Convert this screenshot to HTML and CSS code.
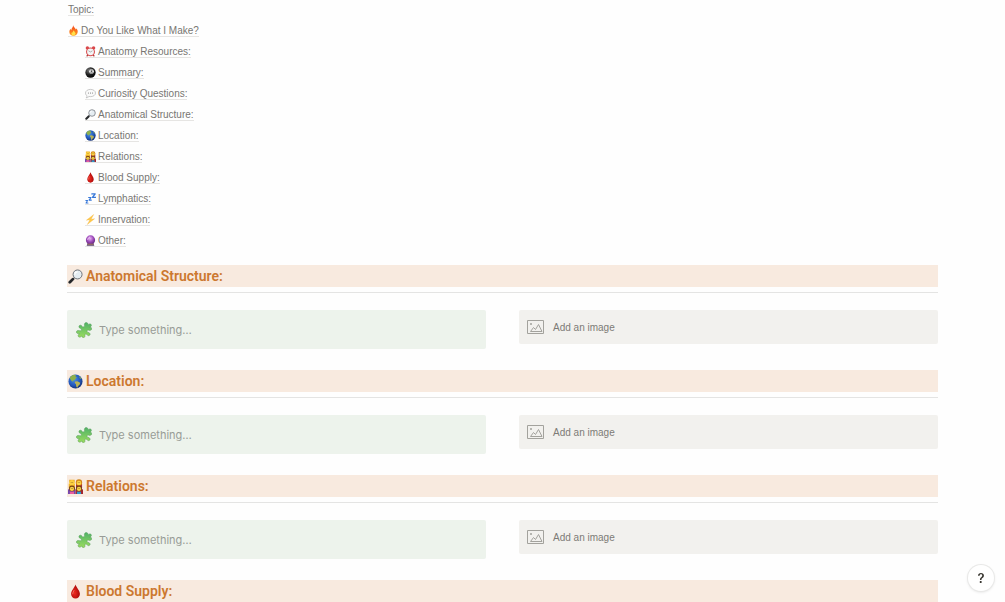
FILE: index.html
```
<!DOCTYPE html>
<html lang="en">
<head>
  <meta charset="UTF-8" />
  <meta name="viewport" content="width=device-width, initial-scale=1" />
  <title>Anatomy Notes</title>
  <link rel="stylesheet" href="styles.css">
</head>
<body>
  <!-- Icon sprite -->
  <svg class="sprite" aria-hidden="true">
    <defs>
      <linearGradient id="g-fire" x1="0" y1="0" x2="0" y2="1">
        <stop offset="0" stop-color="#f4481e" /><stop offset="1" stop-color="#ff9a1c" />
      </linearGradient>
      <linearGradient id="g-puzzle" x1="0" y1="0" x2="0" y2="1">
        <stop offset="0" stop-color="#4fb368" /><stop offset="1" stop-color="#9bdc5e" />
      </linearGradient>
      <radialGradient id="g-earth" cx="0.4" cy="0.35" r="0.7">
        <stop offset="0" stop-color="#4b8fe6" /><stop offset="0.6" stop-color="#2358bd" /><stop offset="1" stop-color="#122c70" />
      </radialGradient>
      <radialGradient id="g-ball" cx="0.35" cy="0.3" r="0.8">
        <stop offset="0" stop-color="#777" /><stop offset="0.5" stop-color="#222" /><stop offset="1" stop-color="#000" />
      </radialGradient>
      <radialGradient id="g-crystal" cx="0.45" cy="0.35" r="0.65">
        <stop offset="0" stop-color="#e9b6f3" /><stop offset="0.5" stop-color="#a452c0" /><stop offset="1" stop-color="#62257f" />
      </radialGradient>
      <radialGradient id="g-drop" cx="0.4" cy="0.6" r="0.6">
        <stop offset="0" stop-color="#ee2a20" /><stop offset="1" stop-color="#a80808" />
      </radialGradient>
    </defs>
    <symbol id="fire" viewBox="0 0 16 16">
      <path fill="url(#g-fire)" d="M7.400.5c.7 2.500 3.400 4 4 6.200.6-.5.800-1.300.700-2.100 1.500 1.700 2.200 3.700 2 5.600-.3 3.300-2.700 5.300-6.100 5.300S2.200 13.500 2 10.500c-.2-2.200.8-3.700 1.600-5 .2 1 .5 1.600 1.100 2C5 4.900 7.500 3.600 7.400.5z" />
      <path fill="#ffe04a" d="M8.200 7.500c.2 1.700 2.800 2.900 2.800 5 0 1.700-1.300 2.700-3 2.700s-3-1-3-2.600c0-1.200.5-1.900 1.100-2.600.1.600.3 1 .7 1.200 0-1.400.7-2.700 1.400-3.700z" />
    </symbol>
    <symbol id="clock" viewBox="0 0 16 16">
      <path stroke="#a42b2b" stroke-width="1.600" d="M4 13l-1.500 2M12 13l1.500 2" />
      <circle cx="3.500" cy="3" r="2.500" fill="#d9474a" /><circle cx="12.500" cy="3" r="2.500" fill="#d9474a" />
      <circle cx="8" cy="8.500" r="6.500" fill="#d8494a" /><circle cx="8" cy="8.500" r="5" fill="#f3f5f6" />
      <path fill="none" stroke="#777" stroke-width=".8" d="M5 7l3 1.700L10.800 7" />
    </symbol>
    <symbol id="eight" viewBox="0 0 16 16">
      <circle cx="8" cy="8" r="7.500" fill="url(#g-ball)" />
      <circle cx="9.500" cy="6.500" r="3.400" fill="#fff" />
      <circle cx="9.500" cy="5.500" r="1" fill="none" stroke="#222" stroke-width=".8" />
      <circle cx="9.500" cy="7.600" r="1.200" fill="none" stroke="#222" stroke-width=".8" />
    </symbol>
    <symbol id="bubble" viewBox="0 0 16 16">
      <path fill="#fafafa" stroke="#aaa" stroke-width=".9" d="M8 2c4 0 7.300 2.200 7.300 5.300S12 12.600 8 12.600c-.8 0-1.500-.1-2.200-.3-1 1.300-2.400 2-4.200 2 .9-.7 1.400-1.600 1.500-2.800C1.600 10.500.7 9 .7 7.300.7 4.200 4 2 8 2z" />
      <g fill="#777"><circle cx="5" cy="7.300" r=".8" /><circle cx="8" cy="7.300" r=".8" /><circle cx="11" cy="7.300" r=".8" /></g>
    </symbol>
    <symbol id="magnifier" viewBox="0 0 16 16">
      <path stroke="#8b9095" stroke-width="1.500" d="M7 9L5 11" />
      <path stroke="#26282b" stroke-width="3" stroke-linecap="round" d="M5.200 10.800L1.900 14.100" />
      <circle cx="10.200" cy="5.800" r="4.800" fill="#e5edf2" stroke="#666b71" stroke-width="1" />
      <path fill="none" stroke="#fff" stroke-width="1.200" d="M7.200 6a3 3 0 0 1 3-3" />
    </symbol>
    <symbol id="earth" viewBox="0 0 16 16">
      <circle cx="8" cy="8" r="7.500" fill="url(#g-earth)" />
      <path fill="#8fb04b" d="M1.700 4.200C3 2.300 4.700 1.100 6.700.8l2 .8-.8 1.500 1.700.6-1.600 1.400-1 1.500-1.700.3.500 1.400-2-.9-1-1.600z" />
      <path fill="#b7b356" d="M7.600 8l2.300-.4 3.100 1.700-.5 2-1.700 1.400-1 2.300-1.100-1.900-.2-2.200-1.400-1.500z" />
      <path fill="#8fb04b" d="M11.600 2l2 1.600.9 1.700-1.700-.5z" />
    </symbol>
    <symbol id="family" viewBox="0 0 16 16">
      <path fill="#f1ae22" d="M.8 5h6.500v5H.8z" /><path fill="#a92d34" d="M8.500 5H15v5H8.500z" />
      <path fill="#e8a820" d="M1.300.8h5.800v3H1.300z" />
      <circle cx="4.200" cy="4" r="2.900" fill="#fcd040" /><circle cx="11.700" cy="3.700" r="3.400" fill="#d28618" />
      <circle cx="11.700" cy="4.300" r="2.400" fill="#fcd448" />
      <path fill="#7549ae" d="M0 11h8v5H0z" /><path fill="#a4262e" d="M8 11h8v5H8z" />
      <circle cx="4.200" cy="10" r="3.200" fill="#754016" /><circle cx="11.700" cy="10" r="3.200" fill="#754016" />
      <circle cx="4.200" cy="10.600" r="2.300" fill="#fcd448" /><circle cx="11.700" cy="10.600" r="2.300" fill="#fcd448" />
      <path fill="#eb5c9c" d="M2 13.500h4.400V16H2z" /><path fill="#2f9bcd" d="M9.500 13.500h4.400V16H9.500z" />
      <g fill="#543311"><circle cx="3.300" cy="3.700" r=".4" /><circle cx="5.100" cy="3.700" r=".4" /><circle cx="10.800" cy="3.900" r=".4" /><circle cx="12.600" cy="3.900" r=".4" /><circle cx="3.300" cy="10.300" r=".4" /><circle cx="5.100" cy="10.300" r=".4" /><circle cx="10.800" cy="10.300" r=".4" /><circle cx="12.600" cy="10.300" r=".4" /></g>
    </symbol>
    <symbol id="drop" viewBox="0 0 16 16">
      <path fill="url(#g-drop)" d="M8 .5c1 3.300 4.700 6.600 4.700 10.200 0 2.900-2.100 4.800-4.700 4.800s-4.700-1.900-4.700-4.800C3.300 7.100 7 3.800 8 .5z" />
      <path fill="none" stroke="#f77b70" stroke-width=".9" stroke-linecap="round" d="M5 10.500c.1-1.400.7-2.500 1.400-3.600" />
    </symbol>
    <symbol id="zzz" viewBox="0 0 16 16">
      <g fill="none" stroke="#3878d8" stroke-linejoin="round" stroke-linecap="round">
        <path stroke-width="2" d="M10 1.300h4.800l-4 5h4.400" />
        <path stroke-width="1.700" d="M5.300 6.500h3.400L6 10.300h3.200" />
        <path stroke-width="1.500" d="M1.200 11h2.600l-2.300 3.500h2.800" />
      </g>
    </symbol>
    <symbol id="bolt" viewBox="0 0 16 16">
      <path fill="#ffc94a" stroke="#efaa2e" stroke-width=".4" d="M12.700.7L2 9l5.200-.5L3.300 15.300 14 6.900l-5.200.6z" />
    </symbol>
    <symbol id="crystal" viewBox="0 0 16 16">
      <path fill="#59406c" d="M3.800 12h8.400l1.400 3.500H2.400z" />
      <circle cx="8" cy="7.200" r="6.700" fill="url(#g-crystal)" />
      <path fill="none" stroke="#f6def9" stroke-width="1.100" stroke-linecap="round" d="M4 6.500c.3-1.600 1.300-2.700 2.800-3.300" />
      <path fill="#c5a25b" d="M3.500 12.800h9v1h-9z" />
    </symbol>
    <symbol id="puzzle" viewBox="0 0 16 16">
      <path fill="url(#g-puzzle)" stroke="#5a9a5c" stroke-width=".5" stroke-linejoin="round" d="M8.600 3.900C8 2.600 8.500.9 9.900.6c1.500-.3 2.200.9 2 2.200 1-.9 2.400-1.300 3.200-.4.900 1-.1 2.300-1.400 2.900 1.300-.1 2.200.5 2 1.700-.3 1.400-1.700 1.600-3 1.200-1.100-.3-1.800.2-1.600 1.200.2.800 1.100 1 1.900 1.300 1.200.5 1.500 1.700.7 2.500-.9.900-2.200.4-2.900-.6-.5-.8-1.500-.7-1.800.1-.3.900.3 1.900-.6 2.600-1.100.8-2.500.1-2.600-1.300-.9 1.100-2.400 1.600-3.300.7-1-.9-.2-2.300 1-3C2 11.800.4 11.500.4 10c0-1.300 1.500-1.900 2.800-1.400 1 .4 2 .2 2.200-.7.200-.8-.7-1.200-1.400-1.600-1.100-.6-1.500-1.900-.6-2.700.9-.9 2.200-.3 2.800.8.500.9 2 .5 2.400-.5z" />
    </symbol>
    <symbol id="image" viewBox="0 0 17 14">
      <path fill="none" stroke="currentColor" d="M.5.500h16v13H.5zM3.500 11.500l3-4 2 2 3-5 3.500 7zM3.500 3.500h1v1h-1z" />
    </symbol>
  </svg>

  <main class="page">
    <nav class="toc">
      <a href="#topic">Topic:</a>
      <a href="#support"><svg class="icon"><use href="#fire" /></svg>Do You Like What I Make?</a>
      <ul>
        <li><a href="#resources"><svg class="icon"><use href="#clock" /></svg>Anatomy Resources:</a></li>
        <li><a href="#summary"><svg class="icon"><use href="#eight" /></svg>Summary:</a></li>
        <li><a href="#questions"><svg class="icon"><use href="#bubble" /></svg>Curiosity Questions:</a></li>
        <li><a href="#structure"><svg class="icon"><use href="#magnifier" /></svg>Anatomical Structure:</a></li>
        <li><a href="#location"><svg class="icon"><use href="#earth" /></svg>Location:</a></li>
        <li><a href="#relations"><svg class="icon"><use href="#family" /></svg>Relations:</a></li>
        <li><a href="#blood"><svg class="icon"><use href="#drop" /></svg>Blood Supply:</a></li>
        <li><a href="#lymphatics"><svg class="icon"><use href="#zzz" /></svg>Lymphatics:</a></li>
        <li><a href="#innervation"><svg class="icon"><use href="#bolt" /></svg>Innervation:</a></li>
        <li><a href="#other"><svg class="icon"><use href="#crystal" /></svg>Other:</a></li>
      </ul>
    </nav>

    <section id="structure">
      <h2><svg class="icon"><use href="#magnifier" /></svg>Anatomical Structure:</h2>
      <hr>
      <div class="columns">
        <label class="callout">
          <svg class="icon"><use href="#puzzle" /></svg>
          <input type="text" placeholder="Type something…" aria-label="Anatomical structure notes">
        </label>
        <button type="button" class="add-image"><svg><use href="#image" /></svg>Add an image</button>
      </div>
    </section>

    <section id="location">
      <h2><svg class="icon"><use href="#earth" /></svg>Location:</h2>
      <hr>
      <div class="columns">
        <label class="callout">
          <svg class="icon"><use href="#puzzle" /></svg>
          <input type="text" placeholder="Type something…" aria-label="Location notes">
        </label>
        <button type="button" class="add-image"><svg><use href="#image" /></svg>Add an image</button>
      </div>
    </section>

    <section id="relations">
      <h2><svg class="icon"><use href="#family" /></svg>Relations:</h2>
      <hr>
      <div class="columns">
        <label class="callout">
          <svg class="icon"><use href="#puzzle" /></svg>
          <input type="text" placeholder="Type something…" aria-label="Relations notes">
        </label>
        <button type="button" class="add-image"><svg><use href="#image" /></svg>Add an image</button>
      </div>
    </section>

    <section id="blood">
      <h2><svg class="icon"><use href="#drop" /></svg>Blood Supply:</h2>
    </section>
  </main>

  <button type="button" class="help" aria-label="Help">?</button>
</body>
</html>
```
FILE: styles.css
```
* {
  box-sizing: border-box;
}

body {
  margin: 0;
  background-color: #fefefe;
  color: #37352f;
  font-family: "Liberation Sans", Arial, sans-serif;
  font-size: 10px;
}

.sprite {
  position: absolute;
  width: 0;
  height: 0;
}

.page {
  padding: 0 67px;
}

.icon {
  flex: none;
}

/* Table of contents */
.toc {
  display: flex;
  flex-direction: column;
  align-items: flex-start;
  padding: 4px 1px 0;
  margin-bottom: 9px;
}

.toc ul {
  list-style: none;
  margin: 0;
  padding: 0 0 0 17px;
}

.toc li {
  display: flex;
}

.toc a {
  display: flex;
  align-items: center;
  gap: 2px;
  height: 12px;
  margin-bottom: 9px;
  border-bottom: 1px solid #e6e5e3;
  color: #787672;
  line-height: 11px;
  text-decoration: none;
}

.toc .icon {
  width: 11px;
  height: 11px;
}

/* Sections */
section {
  margin-bottom: 21px;
}

section:last-child {
  margin-bottom: 0;
}

h2 {
  display: flex;
  align-items: center;
  gap: 3px;
  margin: 0;
  padding: 0 1px;
  background-color: #f8eadf;
  color: #cc782f;
  font-family: Roboto, sans-serif;
  font-size: 14px;
  font-weight: 600;
  line-height: 22px;
}

h2 .icon {
  width: 15px;
  height: 15px;
}

hr {
  height: 1px;
  margin: 5px 0 17px;
  border: 0;
  background-color: #e4e4e3;
}

.columns {
  display: grid;
  grid-template-columns: 1fr 1fr;
  align-items: start;
  gap: 33px;
}

.callout {
  display: flex;
  align-items: center;
  gap: 7px;
  height: 39px;
  padding: 0 9px;
  border-radius: 2px;
  background-color: #edf3ec;
}

.callout .icon {
  width: 16px;
  height: 16px;
}

.callout input {
  flex: 1;
  min-width: 0;
  padding: 0;
  border: 0;
  outline: none;
  background: none;
  color: #37352f;
  font-family: Inter, sans-serif;
  font-size: 11px;
}

.callout input::placeholder {
  color: #989c96;
}

.add-image {
  display: flex;
  align-items: center;
  gap: 9px;
  height: 34px;
  padding: 0 8px;
  border: 0;
  border-radius: 2px;
  background-color: #f2f1ee;
  color: #7d7b76;
  font: inherit;
  cursor: pointer;
}

.add-image svg {
  width: 17px;
  height: 14px;
  color: #a3a29d;
}

/* Floating help button */
.help {
  position: fixed;
  right: 11px;
  bottom: 11px;
  width: 26px;
  height: 26px;
  padding: 0;
  border: 0;
  border-radius: 50%;
  background-color: #fff;
  box-shadow: 0 0 0 1px #e9e9e8, 0 1px 3px rgba(0, 0, 0, 0.15);
  color: #37352f;
  font-family: Inter, sans-serif;
  font-size: 13px;
  font-weight: 600;
  cursor: pointer;
}
```
